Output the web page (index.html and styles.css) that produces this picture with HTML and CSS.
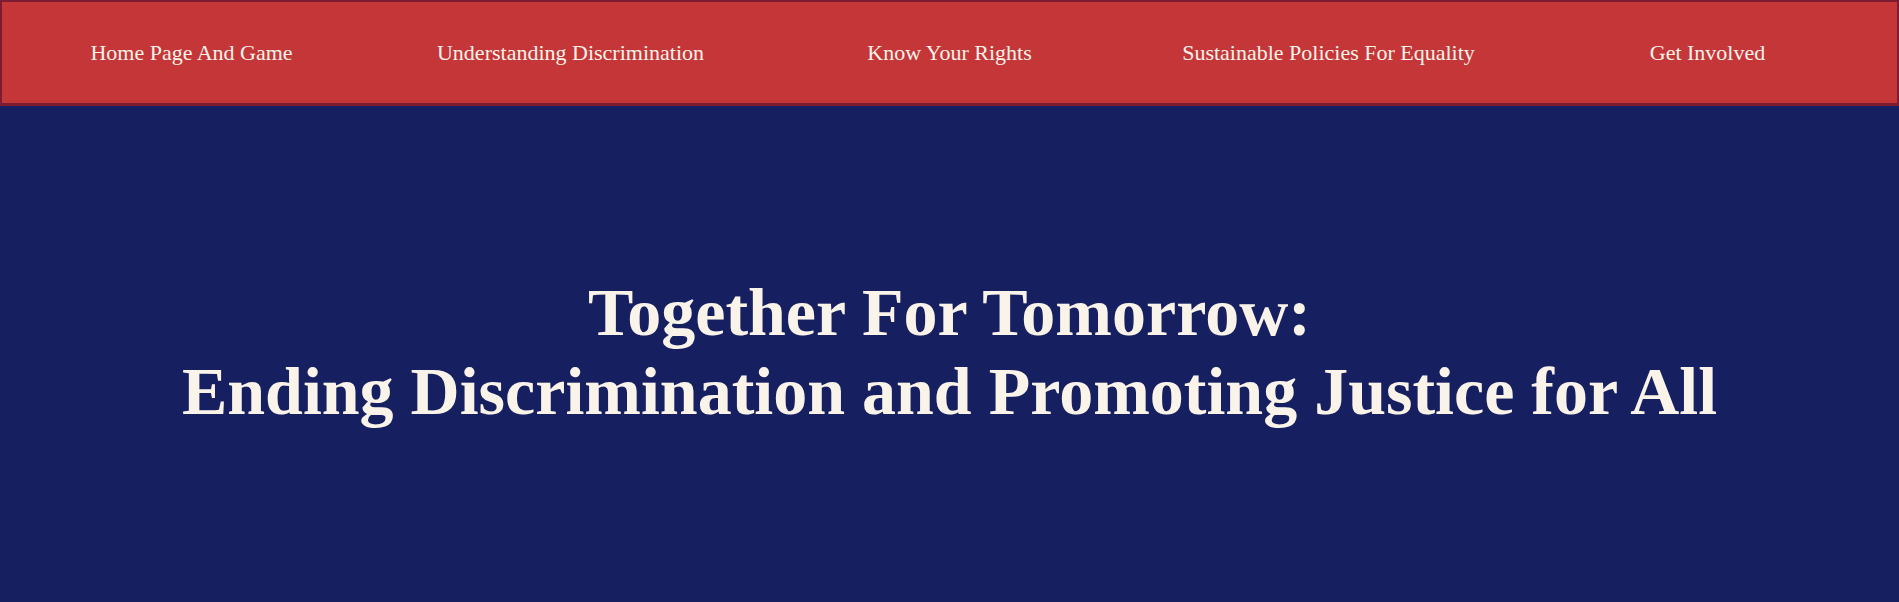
FILE: index.html
```html
<!DOCTYPE html>
<html lang="en">
<head>
<meta charset="utf-8">
<title>Together For Tomorrow</title>
<link rel="stylesheet" href="styles.css">
</head>
<body>
<nav class="nav">
  <a class="nav-item" href="#">Home Page And Game</a>
  <a class="nav-item" href="#">Understanding Discrimination</a>
  <a class="nav-item" href="#">Know Your Rights</a>
  <a class="nav-item" href="#">Sustainable Policies For Equality</a>
  <a class="nav-item" href="#">Get Involved</a>
</nav>
<main class="hero">
  <h1 class="title">Together For Tomorrow:<br>Ending Discrimination and Promoting Justice for All</h1>
</main>
</body>
</html>
```

FILE: styles.css
```css
html, body {
  margin: 0;
  padding: 0;
  height: 100%;
}
body {
  background: #161f5f;
  font-family: "Liberation Serif", "Times New Roman", serif;
  color: #faf3ea;
}
.nav {
  display: flex;
  height: 101px;
  background: #c43638;
  border: 2px solid #7d1b33;
  border-bottom-width: 3px;
}
.nav-item {
  flex: 1;
  display: flex;
  align-items: center;
  justify-content: center;
  color: #faf3ea;
  text-decoration: none;
  font-size: 22px;
}
.hero {
  display: flex;
  justify-content: center;
  padding-top: 167px;
}
.title {
  margin: 0;
  text-align: center;
  font-size: 68px;
  font-weight: bold;
  line-height: 79px;
}
```
